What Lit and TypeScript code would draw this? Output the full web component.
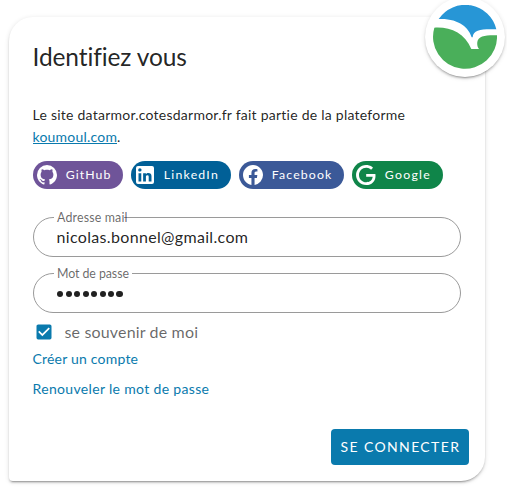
import { LitElement, html, css, svg } from "lit";
import { customElement, property } from "lit/decorators.js";

/** A single line of text, tracked so that it spans the given width. */
@customElement("tracked-text")
class TrackedText extends LitElement {
  @property({ type: Number }) width = 0;
  @property() text = "";

  static styles = css`
    :host { display: inline-block; white-space: nowrap; }
    .line { display: inline-block; white-space: nowrap; font-kerning: normal; }
  `;

  render() {
    return html`<span class="line">${this.text}</span>`;
  }

  updated() {
    const line = this.renderRoot.querySelector<HTMLElement>(".line")!;
    line.style.letterSpacing = "0.001px";
    const natural = line.getBoundingClientRect().width;
    const gap = (this.width - natural) / Math.max(1, this.text.length - 1);
    line.style.letterSpacing = `${gap}px`;
    line.style.marginRight = `${-gap}px`;
  }
}

const providers = [
  {
    name: "GitHub", cls: "github", width: 44.5,
    icon: "M12,2A10,10 0 0,0 2,12C2,16.42 4.87,20.17 8.84,21.5C9.34,21.58 9.5,21.27 9.5,21C9.5,20.77 9.5,20.14 9.5,19.31C6.73,19.91 6.14,17.97 6.14,17.97C5.68,16.81 5.03,16.5 5.03,16.5C4.12,15.88 5.1,15.9 5.1,15.9C6.1,15.97 6.63,16.93 6.63,16.93C7.5,18.45 8.97,18 9.54,17.76C9.63,17.11 9.89,16.67 10.17,16.42C7.95,16.17 5.62,15.31 5.62,11.5C5.62,10.39 6,9.5 6.65,8.79C6.55,8.54 6.2,7.5 6.75,6.15C6.75,6.15 7.59,5.88 9.5,7.17C10.29,6.95 11.15,6.84 12,6.84C12.85,6.84 13.71,6.95 14.5,7.17C16.41,5.88 17.25,6.15 17.25,6.15C17.8,7.5 17.45,8.54 17.35,8.79C18,9.5 18.38,10.39 18.38,11.5C18.38,15.32 16.04,16.16 13.81,16.41C14.17,16.72 14.5,17.33 14.5,18.26C14.5,19.6 14.5,20.68 14.5,21C14.5,21.27 14.66,21.59 15.17,21.5C19.14,20.16 22,16.42 22,12A10,10 0 0,0 12,2Z",
  },
  {
    name: "LinkedIn", cls: "linkedin", width: 54,
    icon: "M19 3A2 2 0 0 1 21 5V19A2 2 0 0 1 19 21H5A2 2 0 0 1 3 19V5A2 2 0 0 1 5 3H19M18.5 18.5V13.2A3.26 3.26 0 0 0 15.24 9.94C14.39 9.94 13.4 10.46 12.92 11.24V10.13H10.13V18.5H12.92V13.57C12.92 12.8 13.54 12.17 14.31 12.17A1.4 1.4 0 0 1 15.71 13.57V18.5H18.5M6.88 8.56A1.68 1.68 0 0 0 8.56 6.88C8.56 5.95 7.81 5.19 6.88 5.19A1.69 1.69 0 0 0 5.19 6.88C5.19 7.81 5.95 8.56 6.88 8.56M8.27 18.5V10.13H5.5V18.5H8.27Z",
  },
  {
    name: "Facebook", cls: "facebook", width: 59.5,
    icon: "M12 2.04C6.5 2.04 2 6.53 2 12.06C2 17.06 5.66 21.21 10.44 21.96V14.96H7.9V12.06H10.44V9.85C10.44 7.34 11.93 5.96 14.22 5.96C15.31 5.96 16.45 6.15 16.45 6.15V8.62H15.19C13.95 8.62 13.56 9.39 13.56 10.18V12.06H16.34L15.89 14.96H13.56V21.96A10 10 0 0 0 22 12.06C22 6.53 17.5 2.04 12 2.04Z",
  },
  {
    name: "Google", cls: "google", width: 45,
    icon: "M21.35,11.1H12.18V13.83H18.69C18.36,17.64 15.19,19.27 12.19,19.27C8.36,19.27 5,16.25 5,12C5,7.9 8.2,4.73 12.2,4.73C15.29,4.73 17.1,6.7 17.1,6.7L19,4.72C19,4.72 16.56,2 12.1,2C6.42,2 2.03,6.8 2.03,12C2.03,17.05 6.16,22 12.25,22C17.6,22 21.5,18.33 21.5,12.91C21.5,11.76 21.35,11.1 21.35,11.1V11.1Z",
  },
];

const logo = svg`
  <path fill="#2796d6" d="M116 57A96 96 0 0 1 289 88C250 87 219 87 218 112H215C207 83 175 54 116 57Z"/>
  <path fill="#4aaf5a" d="M103 83C150 80 194 98 214 147H237C232 140 231 134 232 126C234 108 258 105 291 106A96 96 0 1 1 103 83Z"/>`;

@customElement("app-root")
class AppRoot extends LitElement {
  static styles = css`
    :host {
      display: block;
      box-sizing: border-box;
      height: 490px;
      padding: 17px 22px 9px 9px;
      overflow: hidden;
      background: #fff;
      color: rgba(0, 0, 0, 0.87);
      font: 14px/22px Lato, "Open Sans", sans-serif;
    }
    * { box-sizing: border-box; }
    .card {
      position: relative;
      height: 464px;
      padding: 28px 16px 16px 24px;
      display: flex;
      flex-direction: column;
      border-radius: 24px 4px 24px 4px;
      background: #fff;
      box-shadow: 0 3px 1px -2px rgba(0, 0, 0, 0.2), 0 2px 2px 0 rgba(0, 0, 0, 0.14), 0 1px 5px 0 rgba(0, 0, 0, 0.12);
    }
    .avatar {
      position: absolute;
      top: -20px;
      right: -20px;
      width: 80px;
      height: 80px;
      padding: 8px;
      border-radius: 50%;
      background: #fff;
      box-shadow: 0 3px 1px -2px rgba(0, 0, 0, 0.2), 0 2px 2px 0 rgba(0, 0, 0, 0.14), 0 1px 5px 0 rgba(0, 0, 0, 0.12);
    }
    .avatar svg { display: block; width: 64px; height: 64px; }
    h1 { margin: 0 0 35px -0.5px; height: 24px; font-size: 24.5px; line-height: 24px; font-weight: 400; }
    .intro { margin: 0 0 0 -0.5px; height: 44px; }
    .intro tracked-text { vertical-align: top; }
    a { color: #0a7aad; text-decoration: none; }
    .site { display: inline-block; height: 18px; border-bottom: 1px solid #0a7aad; vertical-align: top; }
    .providers { display: flex; gap: 8px; margin-top: 13px; height: 28px; }
    .chip {
      display: flex;
      align-items: center;
      height: 28px;
      padding-left: 1.6px;
      border-radius: 14px;
      color: #fff;
      font-size: 12.3px;
      line-height: 28px;
    }
    .chip svg { width: 24px; height: 24px; margin-right: 7.2px; fill: #fff; }
    .github { width: 90px; background: #6f5499; }
    .linkedin { width: 100px; background: #016097; }
    .facebook { width: 105px; background: #3b5998; }
    .google { width: 91px; background: #0f8549; }
    .field {
      position: relative;
      width: 428px;
      height: 40px;
      margin-top: 28px;
      padding: 0 22.5px;
      border: 1px solid #9a9a9a;
      border-radius: 20px;
      font-size: 16px;
      line-height: 37px;
    }
    .field + .field { margin-top: 16px; }
    .label {
      position: absolute;
      left: 20px;
      top: -9px;
      height: 18px;
      padding-left: 3px;
      background: #fff;
      color: rgba(0, 0, 0, 0.6);
      font-size: 12.4px;
      line-height: 18px;
    }
    .mail { width: 70px; }
    .pass { width: 78px; }
    .dots { display: flex; gap: 2.2px; height: 38px; align-items: center; padding: 2.4px 0 0 0.6px; }
    .dot { width: 6.3px; height: 6.3px; border-radius: 50%; background: #212121; }
    .remember {
      display: flex;
      align-items: center;
      height: 20px;
      margin-top: 9px;
      font-size: 16px;
      color: rgba(0, 0, 0, 0.6);
    }
    .remember svg { width: 20px; height: 20px; margin: 0 10.5px 0 1px; fill: #0a7aad; }
    .links { display: flex; flex-direction: column; gap: 8px; margin: 6px 0 0 -0.5px; }
    .links a { height: 22px; }
    .submit {
      align-self: flex-end;
      margin-top: auto;
      width: 138px;
      height: 36px;
      padding: 0 0 0 9.5px;
      border: 0;
      border-radius: 4px;
      background: #0a7aad;
      color: #fff;
      font: 14px/36px Lato, "Open Sans", sans-serif;
      text-align: left;
    }
  `;

  render() {
    return html`
      <div class="card">
        <div class="avatar"><svg viewBox="99 15 192 192">${logo}</svg></div>
        <h1><tracked-text text="Identifiez vous" .width=${154.5}></tracked-text></h1>
        <p class="intro">
          <tracked-text text="Le site datarmor.cotesdarmor.fr fait partie de la plateforme" .width=${372.5}></tracked-text><br />
          <a class="site"><tracked-text text="koumoul.com" .width=${84.5}></tracked-text></a>.
        </p>
        <div class="providers">
          ${providers.map((p) => html`
            <div class="chip ${p.cls}">
              <svg viewBox="0 0 24 24"><path d=${p.icon} /></svg>
              <tracked-text .text=${p.name} .width=${p.width}></tracked-text>
            </div>`)}
        </div>
        <div class="field">
          <span class="label mail"><tracked-text text="Adresse mail" .width=${70.5}></tracked-text></span>
          <tracked-text text="nicolas.bonnel@gmail.com" .width=${191.5}></tracked-text>
        </div>
        <div class="field">
          <span class="label pass"><tracked-text text="Mot de passe" .width=${72}></tracked-text></span>
          <div class="dots">${Array.from({ length: 8 }, () => html`<span class="dot"></span>`)}</div>
        </div>
        <div class="remember">
          <svg viewBox="0 0 24 24"><path d="M10,17L5,12L6.41,10.58L10,14.17L17.59,6.58L19,8M19,3H5C3.89,3 3,3.89 3,5V19A2,2 0 0,0 5,21H19A2,2 0 0,0 21,19V5C21,3.89 20.1,3 19,3Z" /></svg>
          <tracked-text text="se souvenir de moi" .width=${133.5}></tracked-text>
        </div>
        <div class="links">
          <a><tracked-text text="Créer un compte" .width=${105.5}></tracked-text></a>
          <a><tracked-text text="Renouveler le mot de passe" .width=${176.5}></tracked-text></a>
        </div>
        <button class="submit"><tracked-text text="SE CONNECTER" .width=${118.5}></tracked-text></button>
      </div>
    `;
  }
}
